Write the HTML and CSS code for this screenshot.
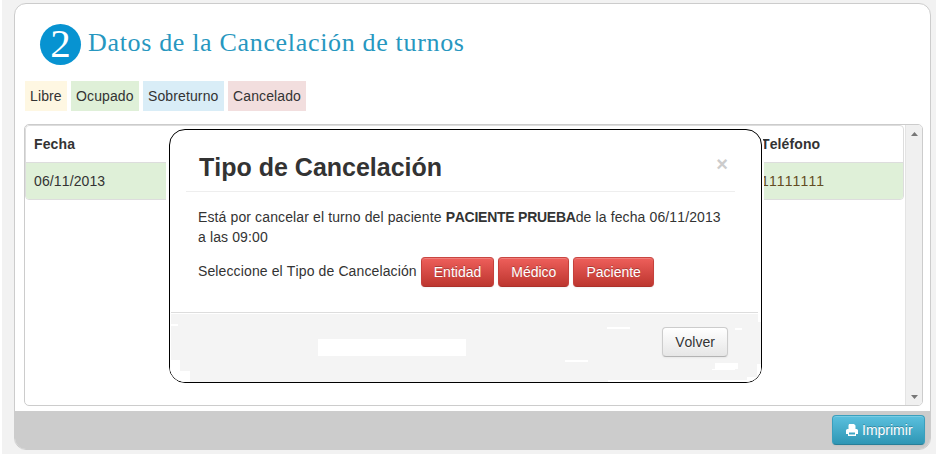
FILE: index.html
```html
<!DOCTYPE html>
<html lang="es">
<head>
<meta charset="utf-8">
<title>Cancelación de turnos</title>
<link rel="stylesheet" href="styles.css">
</head>
<body>
<main class="card">
  <div class="card-body">
    <header class="heading">
      <span class="step">2</span>
      <h1>Datos de la Cancelación de turnos</h1>
    </header>
    <div class="legend">
      <span class="tag free">Libre</span>
      <span class="tag busy">Ocupado</span>
      <span class="tag extra">Sobreturno</span>
      <span class="tag cancelled">Cancelado</span>
    </div>
    <section class="panel">
      <div class="table">
        <div class="row head"><span>Fecha</span><span class="phone">Teléfono</span></div>
        <div class="row data"><span>06/11/2013</span><span class="phone">11111111</span></div>
      </div>
      <div class="scrollbar">
        <svg width="7" height="4" viewBox="0 0 7 4"><path d="M0 4L3.5 0L7 4Z" fill="#777"/></svg>
        <svg width="7" height="4" viewBox="0 0 7 4"><path d="M0 0L3.5 4L7 0Z" fill="#777"/></svg>
      </div>
    </section>
  </div>
  <footer class="card-footer">
    <button class="btn info">
      <svg width="12" height="12" viewBox="0 0 12 12"><path fill="#fff" fill-rule="evenodd" d="M3 0H8L9.500 1.500V5H10.500Q12 5 12 6.500V10H10V12H2V10H0V6.500Q0 5 1.500 5H2.500V1.500ZM3 8.500V10.500H9V8.500Z"/></svg>
      <span>Imprimir</span>
    </button>
  </footer>
</main>
<div class="modal">
  <div class="modal-header"><h2>Tipo de Cancelación</h2><span class="close">×</span></div>
  <div class="modal-body">
    <p>Está por cancelar el turno del paciente <b>PACIENTE PRUEBA</b>de la fecha 06/11/2013 a las 09:00</p>
    <div class="choices">
      <span>Seleccione el Tipo de Cancelación</span>
      <button class="btn danger">Entidad</button>
      <button class="btn danger">Médico</button>
      <button class="btn danger">Paciente</button>
    </div>
  </div>
  <div class="modal-footer">
    <svg class="patches" width="591" height="70" viewBox="170 312 591 70" fill="#fff" shape-rendering="crispEdges">
      <path d="M170 312h1v70h-1zM170 324h8v2h-8zM170 360h10v11h10v11h-20zM318 339h148v17H318zM607 327h23v2h-23zM565 360h23v2h-23zM608 380h153v2H608zM735 328h7v2h-7zM715 363h23v6h-23zM712 369h23v1h-23zM758 312h3v10h-3zM757 364h4v18h-14v-5h10z"/>
    </svg>
    <button class="btn plain">Volver</button>
  </div>
</div>
</body>
</html>
```
FILE: styles.css
```css
* { box-sizing: border-box; }
body {
  margin: 0;
  height: 454px;
  padding: 3px 5px 4px 12px;
  border-left: 2px solid #fff;
  background: #f2f2f2;
  color: #333;
  font: 14px/20px "Liberation Sans", Arial, sans-serif;
  font-kerning: none;
  letter-spacing: .12px;
  overflow: hidden;
}
h1, h2, p { margin: 0; }
.card {
  display: flex;
  flex-direction: column;
  width: 917px;
  height: 447px;
  border: 1px solid #ccc;
  border-radius: 12px;
  background: #fff;
  overflow: hidden;
}
.card-body { flex: 1; padding: 19px 7px 5px 9px; }
.heading { display: flex; align-items: center; height: 42px; padding-left: 16px; }
.step {
  width: 41px;
  height: 41px;
  margin-right: 7px;
  border-radius: 50%;
  background: #0793d1;
  color: #fff;
  font: 41px/38px "Liberation Serif", serif;
  text-align: center;
}
h1 {
  height: 42px;
  color: #2797c0;
  font: 26px/40px "Liberation Serif", serif;
  letter-spacing: .67px;
  white-space: nowrap;
}
.legend { display: flex; gap: 4px; margin: 16px 0 13px 1px; }
.tag { height: 30px; padding: 5px; }
.free { width: 42px; background: #fef7e2; }
.busy { width: 68px; background: #dff0d8; }
.extra { width: 81px; background: #d9edf7; }
.cancelled { width: 78px; background: #f2dede; }
.panel {
  display: flex;
  justify-content: space-between;
  width: 899px;
  height: 282px;
  border: 1px solid #ccc;
  border-radius: 5px;
  overflow: hidden;
}
.table {
  width: 879px;
  height: 75px;
  border: 1px solid #ddd;
  border-radius: 4px;
  overflow: hidden;
}
.row { display: flex; padding: 8px; height: 36px; }
.row span { width: 727px; }
.row .phone { width: auto; }
.head { font-weight: bold; }
.data { height: 37px; border-top: 1px solid #ddd; background: #dff0d8; }
.data .phone { color: #634c22; }
.scrollbar {
  display: flex;
  flex-direction: column;
  justify-content: space-between;
  align-items: center;
  width: 17px;
  padding: 7px 0 6px;
  border-left: 1px solid #e4e4e4;
  background: #f0f0f0;
}
.card-footer {
  display: flex;
  justify-content: flex-end;
  height: 38px;
  padding: 4px 5px;
  background: #ccc;
}
.btn {
  height: 30px;
  padding: 4px 12px;
  border: 1px solid;
  border-radius: 4px;
  font: inherit;
  color: #fff;
  text-shadow: 0 -1px 0 rgba(0,0,0,.25);
  box-shadow: inset 0 1px 0 rgba(255,255,255,.2), 0 1px 2px rgba(0,0,0,.05);
}
.info {
  display: flex;
  align-items: center;
  gap: 4px;
  width: 93px;
  padding-left: 13px;
  letter-spacing: 0;
  border-color: #3a9fbd #3a9fbd #287f98;
  background: linear-gradient(#5bc0de, #2f96b4);
}
.info svg { flex: none; }
.danger {
  border-color: #c94540 #c5413c #ab302a;
  background: linear-gradient(#ee5f5b, #bd362f);
}
.plain {
  position: relative;
  width: 66px;
  border-color: #ccc #ccc #b3b3b3;
  background: linear-gradient(#fff, #e6e6e6);
  color: #333;
  text-shadow: 0 1px 1px rgba(255,255,255,.75);
}
.modal {
  position: absolute;
  left: 169px;
  top: 129px;
  display: flex;
  flex-direction: column;
  width: 593px;
  height: 254px;
  border: 1px solid #000;
  border-radius: 16px;
  background: #fff;
  box-shadow: -3px 0 0 #fff, 2px 0 0 #fff;
  overflow: hidden;
}
.modal-header {
  display: flex;
  justify-content: space-between;
  width: 549px;
  height: 62px;
  margin-left: 16px;
  padding: 17px 7px 0 13px;
  border-bottom: 1px solid #eee;
}
h2 { font-size: 25px; line-height: 40px; letter-spacing: 0; white-space: nowrap; }
.close { color: #ccc; font-size: 20px; font-weight: bold; line-height: 34px; }
.modal-body { flex: 1; padding: 15px 32px 0 28px; }
.modal-body b { letter-spacing: -.25px; }
.choices { display: flex; gap: 4px; margin-top: 10px; }
.choices span { line-height: 28px; white-space: nowrap; }
.modal-footer {
  position: relative;
  display: flex;
  justify-content: flex-end;
  height: 70px;
  padding: 14px 33px 0 0;
  border-top: 1px solid #ddd;
  background: #f4f4f4;
  box-shadow: inset 0 1px 0 #fff;
}
.patches { position: absolute; left: 0; top: -1px; }
```
